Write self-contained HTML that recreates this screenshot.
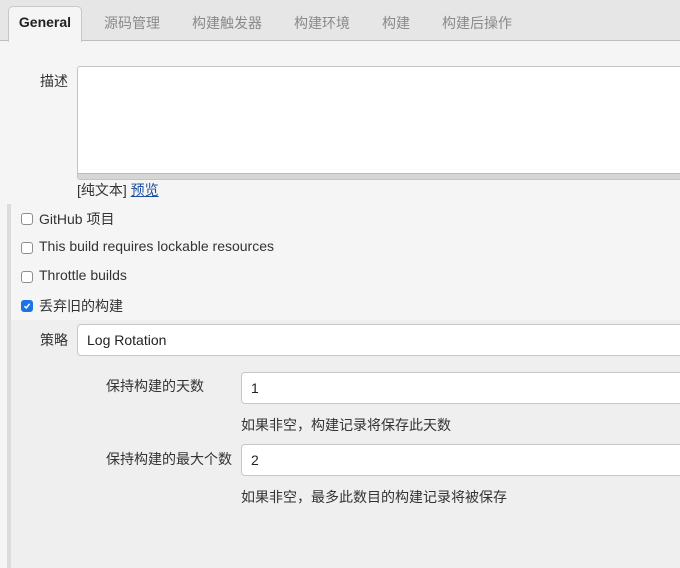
<!DOCTYPE html>
<html><head><meta charset="utf-8"><style>
*{box-sizing:border-box;margin:0;padding:0}
body{width:680px;height:568px;overflow:hidden;background:#f5f5f5;font-family:"Liberation Sans","Noto Sans CJK SC",sans-serif;font-size:13px;color:#333;position:relative}
.abs{position:absolute;white-space:nowrap}
.tabs{position:absolute;left:0;top:0;width:680px;height:41px;background:#e6e6e6;border-bottom:1px solid #bdbdbd}
.tab{position:absolute;top:13px;font-size:14px;color:#8a8a8a}
.active{position:absolute;left:8px;top:6px;width:74px;height:36px;background:#f5f5f5;border:1px solid #c8c8c8;border-bottom:none;border-radius:5px 5px 0 0;font-weight:bold;font-size:14px;color:#222;text-align:center;line-height:31px}
.ta{position:absolute;left:77px;top:66px;width:610px;height:114px;background:#fff;border:1px solid #c4c4c4;border-radius:3px}
.ta:after{content:"";position:absolute;left:0;right:0;bottom:0;height:5px;background:#d6d6d6;border-top:1px solid #bbb}
.bar{position:absolute;left:7px;top:204px;width:4px;height:364px;background:#dcdcdc}
.sec{position:absolute;left:11px;top:320px;width:669px;height:248px;background:#efefef}
.cb{position:absolute;left:21px;width:12px;height:12px;border:1px solid #8e8e8e;border-radius:3px;background:#fff}
.cb.on{background:#1a73e8;border-color:#1a73e8}
.inp{position:absolute;background:#fff;border:1px solid #c6c6c6;border-radius:4px;font-size:14px;color:#222;padding-left:9px;line-height:30px;height:32px;width:700px}
a{color:#1f4fa0}
</style></head><body>
<div class="tabs">
<div class="active">General</div>
<div class="tab" style="left:104px">源码管理</div>
<div class="tab" style="left:192px">构建触发器</div>
<div class="tab" style="left:294px">构建环境</div>
<div class="tab" style="left:382px">构建</div>
<div class="tab" style="left:442px">构建后操作</div>
</div>
<div class="abs" style="left:40px;top:71px;font-size:14px">描述</div>
<div class="ta"></div>
<div class="abs" style="left:77px;top:180px;font-size:14px">[纯文本] <a href="#">预览</a></div>
<div class="bar"></div>
<div class="sec"></div>
<div class="cb" style="top:213px"></div>
<div class="abs" style="left:39px;top:209px;font-size:14px">GitHub 项目</div>
<div class="cb" style="top:242px"></div>
<div class="abs" style="left:39px;top:238px;font-size:14px">This build requires lockable resources</div>
<div class="cb" style="top:271px"></div>
<div class="abs" style="left:39px;top:267px;font-size:14px">Throttle builds</div>
<div class="cb on" style="top:300px"><svg width="10" height="10" viewBox="0 0 10 10" style="position:absolute;left:0;top:0"><path d="M2.5 5.2 L4.3 7 L7.6 2.8" stroke="#fff" stroke-width="1.5" fill="none"/></svg></div>
<div class="abs" style="left:39px;top:296px;font-size:14px">丢弃旧的构建</div>
<div class="abs" style="left:40px;top:330px;font-size:14px">策略</div>
<div class="inp" style="left:77px;top:324px">Log Rotation</div>
<div class="abs" style="left:106px;top:376px;font-size:14px">保持构建的天数</div>
<div class="inp" style="left:241px;top:372px">1</div>
<div class="abs" style="left:241px;top:415px;font-size:14px">如果非空，构建记录将保存此天数</div>
<div class="abs" style="left:106px;top:449px;font-size:14px">保持构建的最大个数</div>
<div class="inp" style="left:241px;top:444px">2</div>
<div class="abs" style="left:241px;top:487px;font-size:14px">如果非空，最多此数目的构建记录将被保存</div>
</body></html>
